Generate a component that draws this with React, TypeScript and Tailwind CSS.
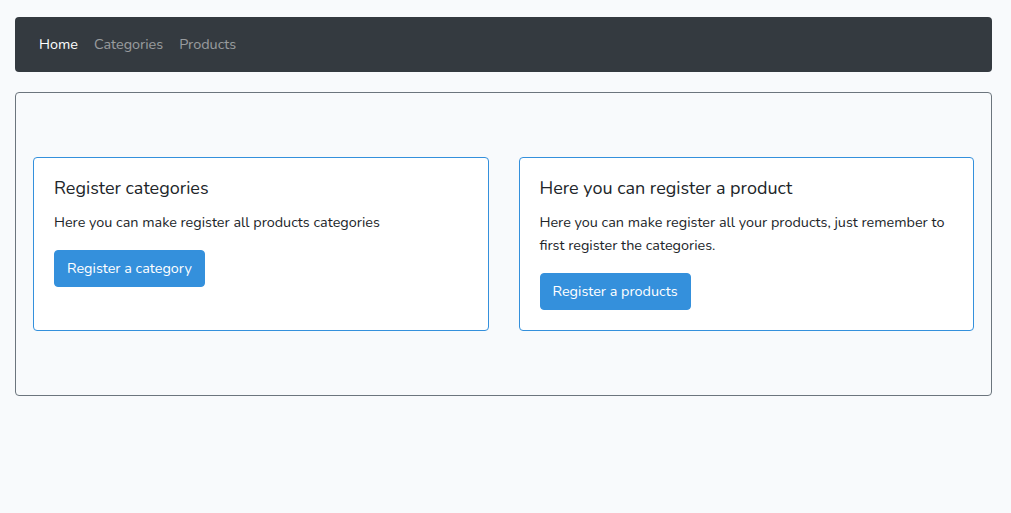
const Card = ({ title, text, button }: { title: string; text: string; button: string }) => {
  return (
    <div className="flex-1 rounded border border-[#3490dc] bg-white p-5">
      <h5 className="mb-[11px] text-[18px] leading-[1.2] text-[#212529]">{title}</h5>
      <p className="mb-4 text-[14.4px] leading-[1.6] text-[#212529]">{text}</p>
      <button className="rounded border border-[#3490dc] bg-[#3490dc] px-3 py-1.5 text-[14.4px] leading-[1.6] text-white">
        {button}
      </button>
    </div>
  );
};

export default function App() {
  return (
    <div className="min-h-[513px] bg-[#f8fafc] pl-[15px] pr-[19px] pt-[17px] font-['Nunito','Lato',sans-serif]">
      {/* Navbar */}
      <nav className="flex rounded bg-[#343a40] px-4 py-2 text-[14.4px] leading-[1.6]">
        <a className="p-2 text-white">Home</a>
        <a className="p-2 text-white/50">Categories</a>
        <a className="p-2 text-white/50">Products</a>
      </nav>

      {/* Main */}
      <div className="mt-5 flex gap-[30px] rounded border border-[#6c757d] px-[17px] py-16">
        <Card
          title="Register categories"
          text="Here you can make register all products categories"
          button="Register a category"
        />
        <Card
          title="Here you can register a product"
          text="Here you can make register all your products, just remember to first register the categories."
          button="Register a products"
        />
      </div>
    </div>
  );
}
